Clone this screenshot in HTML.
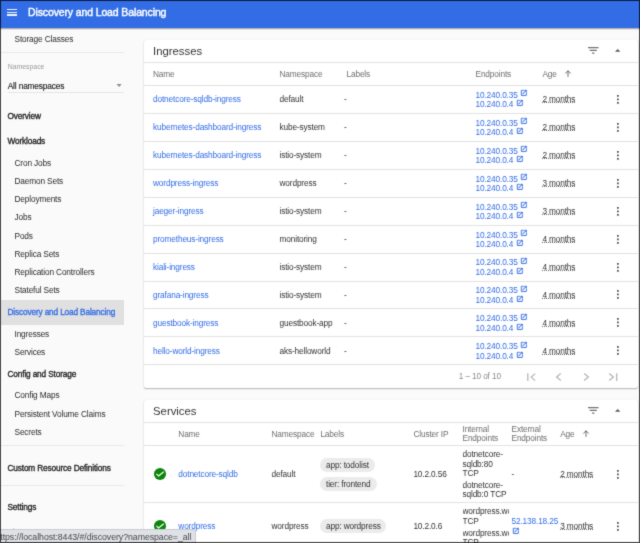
<!DOCTYPE html>
<html><head><meta charset="utf-8"><title>Discovery and Load Balancing</title>
<style>
*{box-sizing:border-box;margin:0;padding:0}
html,body{width:640px;height:543px;overflow:hidden;background:#fafafa;font-family:"Liberation Sans",sans-serif;color:#212121}
#frame{will-change:transform;filter:url(#sb);position:absolute;left:0;top:0;width:640px;height:543px;overflow:hidden;background:#fafafa}
#bd{position:absolute;left:0;top:0;width:640px;height:543px;border:1px solid rgba(0,0,0,.72);z-index:50;pointer-events:none}
#hdr{position:absolute;left:0;top:0;width:640px;height:28px;background:#326de6;box-shadow:0 .5px 1.2px rgba(0,0,0,.38);z-index:5}
#hdr .title{position:absolute;left:28px;top:5px;height:14px;line-height:14px;font-size:10.5px;font-weight:normal;-webkit-text-stroke:0.42px #fff;color:#fff;white-space:nowrap;letter-spacing:-0.125px}
.ham i{position:absolute;left:6.9px;width:10.6px;height:1.2px;background:#fff;opacity:.92}
.t{position:absolute;white-space:nowrap;height:12px;line-height:12px;font-size:8.3px;letter-spacing:-0.15px;color:#333}
.nh{font-weight:normal;-webkit-text-stroke:0.32px currentColor;left:7.5px;font-size:8.3px;letter-spacing:-0.16px;color:#222}
.ns{left:14.5px;color:#2b2b2b}
.hr{position:absolute;left:1px;width:123px;height:1px;background:#e9e9e9}
.card{position:absolute;left:144px;width:493.5px;background:#fff;box-shadow:0 1px 1.5px rgba(0,0,0,.28),0 0 1px rgba(0,0,0,.12);border-radius:2px;overflow:hidden}
.ct{position:absolute;left:9px;font-size:11.35px;height:16px;line-height:16px;color:#333;white-space:nowrap}
.ln{position:absolute;left:0;width:494px;height:1px;background:#e2e2e2}
.th{color:#6e6e6e}
.lk{color:#326de6}
.u{text-decoration:underline dotted #666;text-decoration-thickness:1px;text-underline-offset:0.4px;text-decoration-skip-ink:none}
.chip{position:absolute;height:14px;border-radius:7px;background:#ebebeb}
svg{position:absolute;overflow:visible}
</style></head><body>
<svg width="0" height="0" style="position:absolute"><defs><filter id="sb" x="0" y="0" width="100%" height="100%" color-interpolation-filters="sRGB"><feConvolveMatrix order="3" kernelMatrix="0.02 0.09 0.02 0.09 0.56 0.09 0.02 0.09 0.02" edgeMode="duplicate" preserveAlpha="true"/></filter></defs></svg>
<div id="frame">
<div id="hdr"><div class="ham"><i style="top:8.800px"></i><i style="top:11.600px"></i><i style="top:14.400px"></i></div><div class="title">Discovery and Load Balancing</div></div>
<div id="side">
<div class="t ns" style="top:33.00px;">Storage Classes</div>
<div class="hr" style="top:52px"></div>
<div class="t " style="left:7.70px;top:61.00px;font-size:6.9px;letter-spacing:0;color:#9a9a9a">Namespace</div>
<div class="t " style="left:7.70px;top:79.70px;color:#222;letter-spacing:-0.14px;-webkit-text-stroke:0.15px #222">All namespaces</div>
<div class="hr" style="top:92px;left:7.5px;width:116.500px;background:#e6e6e6"></div>
<svg style="left:115.500px;top:84.300px" width="6.200" height="3.100" viewBox="0 0 5 3"><path d="M0 0h5L2.500 3z" fill="#8f8f8f"/></svg>
<div class="t nh" style="top:109.50px;">Overview</div>
<div class="t nh" style="top:134.70px;">Workloads</div>
<div class="t ns" style="top:156.50px;">Cron Jobs</div>
<div class="t ns" style="top:174.70px;">Daemon Sets</div>
<div class="t ns" style="top:193.00px;">Deployments</div>
<div class="t ns" style="top:211.20px;">Jobs</div>
<div class="t ns" style="top:229.70px;">Pods</div>
<div class="t ns" style="top:248.00px;">Replica Sets</div>
<div class="t ns" style="top:266.00px;">Replication Controllers</div>
<div class="t ns" style="top:284.40px;">Stateful Sets</div>
<div style="position:absolute;left:1px;top:299.5px;width:123px;height:25px;background:#e0e0e0"></div>
<div class="t nh" style="top:306.00px;color:#326de6">Discovery and Load Balancing</div>
<div class="t ns" style="top:328.00px;">Ingresses</div>
<div class="t ns" style="top:346.00px;">Services</div>
<div class="t nh" style="top:368.00px;">Config and Storage</div>
<div class="t ns" style="top:389.00px;">Config Maps</div>
<div class="t ns" style="top:407.50px;">Persistent Volume Claims</div>
<div class="t ns" style="top:425.80px;">Secrets</div>
<div class="hr" style="top:445px"></div>
<div class="t nh" style="top:462.00px;">Custom Resource Definitions</div>
<div class="hr" style="top:485px"></div>
<div class="t nh" style="top:501.00px;">Settings</div>
<div class="t nh" style="top:526.50px;">About</div>
</div>
<div class="card" style="top:40.0px;height:348px">
<div class="ct" style="top:2.50px">Ingresses</div>
<svg style="left:443.90px;top:6.85px" width="11" height="8" viewBox="0 0 11 8"><path d="M0 0h10.500v1.150H0zM1.700 2.800h7.100v1.150H1.700zM4.100 5.600h2.300v1.150H4.100z" fill="#707070"/></svg>
<svg style="left:471.40px;top:8.70px" width="5.400" height="2.900" viewBox="0 0 6 3"><path d="M0 3h6L3 0z" fill="#5a5a5a"/></svg>
<div class="ln" style="top:22.00px"></div>
<div class="t th" style="left:9.00px;top:28.00px;">Name</div>
<div class="t th" style="left:135.50px;top:28.00px;">Namespace</div>
<div class="t th" style="left:202.50px;top:28.00px;">Labels</div>
<div class="t th" style="left:331.50px;top:28.00px;">Endpoints</div>
<div class="t th" style="left:398.40px;top:28.00px;">Age</div>
<svg style="left:420.50px;top:30.10px" width="6" height="7" viewBox="0 0 6 7"><path d="M3 .8v6M.3 3.500L3 .8l2.700 2.700" fill="none" stroke="#444" stroke-width=".8"/></svg>
<svg style="left:0;top:44.80px" width="494" height="1"><rect width="494" height="1" fill="#e2e2e2"/></svg>
<div class="t lk" style="left:9.00px;top:53.10px;">dotnetcore-sqldb-ingress</div>
<div class="t " style="left:135.50px;top:53.10px;">default</div>
<div class="t " style="left:200.00px;top:53.10px;">-</div>
<div class="t lk" style="left:331.50px;top:48.70px;">10.240.0.35</div>
<svg style="left:375.90px;top:49.40px" width="7.6" height="7.6" viewBox="0 0 24 24"><path d="M19 19H5V5h7V3H5a2 2 0 0 0-2 2v14a2 2 0 0 0 2 2h14c1.1 0 2-.9 2-2v-7h-2v7zM14 3v2h3.59l-9.830 9.830 1.410 1.410L19 6.410V10h2V3h-7z" fill="#326de6" stroke="#326de6" stroke-width=".8"/></svg>
<div class="t lk" style="left:331.50px;top:58.20px;">10.240.0.4</div>
<svg style="left:371.50px;top:58.90px" width="7.6" height="7.6" viewBox="0 0 24 24"><path d="M19 19H5V5h7V3H5a2 2 0 0 0-2 2v14a2 2 0 0 0 2 2h14c1.1 0 2-.9 2-2v-7h-2v7zM14 3v2h3.59l-9.830 9.830 1.410 1.410L19 6.410V10h2V3h-7z" fill="#326de6" stroke="#326de6" stroke-width=".8"/></svg>
<div class="t u" style="left:398.40px;top:53.10px;">2 months</div>
<svg style="left:473.15px;top:54.75px" width="2" height="9" viewBox="0 0 2 9"><path d="M0 0h1.800v1.800H0zM0 3.500h1.800v1.800H0zM0 7h1.800v1.800H0z" fill="#555"/></svg>
<svg style="left:0;top:72.80px" width="494" height="1"><rect width="494" height="1" fill="#e2e2e2"/></svg>
<div class="t lk" style="left:9.00px;top:81.06px;">kubernetes-dashboard-ingress</div>
<div class="t " style="left:135.50px;top:81.06px;">kube-system</div>
<div class="t " style="left:200.00px;top:81.06px;">-</div>
<div class="t lk" style="left:331.50px;top:76.66px;">10.240.0.35</div>
<svg style="left:375.90px;top:77.36px" width="7.6" height="7.6" viewBox="0 0 24 24"><path d="M19 19H5V5h7V3H5a2 2 0 0 0-2 2v14a2 2 0 0 0 2 2h14c1.1 0 2-.9 2-2v-7h-2v7zM14 3v2h3.59l-9.830 9.830 1.410 1.410L19 6.410V10h2V3h-7z" fill="#326de6" stroke="#326de6" stroke-width=".8"/></svg>
<div class="t lk" style="left:331.50px;top:86.16px;">10.240.0.4</div>
<svg style="left:371.50px;top:86.86px" width="7.6" height="7.6" viewBox="0 0 24 24"><path d="M19 19H5V5h7V3H5a2 2 0 0 0-2 2v14a2 2 0 0 0 2 2h14c1.1 0 2-.9 2-2v-7h-2v7zM14 3v2h3.59l-9.830 9.830 1.410 1.410L19 6.410V10h2V3h-7z" fill="#326de6" stroke="#326de6" stroke-width=".8"/></svg>
<div class="t u" style="left:398.40px;top:81.06px;">2 months</div>
<svg style="left:473.15px;top:82.71px" width="2" height="9" viewBox="0 0 2 9"><path d="M0 0h1.800v1.800H0zM0 3.500h1.800v1.800H0zM0 7h1.800v1.800H0z" fill="#555"/></svg>
<svg style="left:0;top:100.90px" width="494" height="1"><rect width="494" height="1" fill="#e2e2e2"/></svg>
<div class="t lk" style="left:9.00px;top:109.02px;">kubernetes-dashboard-ingress</div>
<div class="t " style="left:135.50px;top:109.02px;">istio-system</div>
<div class="t " style="left:200.00px;top:109.02px;">-</div>
<div class="t lk" style="left:331.50px;top:104.62px;">10.240.0.35</div>
<svg style="left:375.90px;top:105.32px" width="7.6" height="7.6" viewBox="0 0 24 24"><path d="M19 19H5V5h7V3H5a2 2 0 0 0-2 2v14a2 2 0 0 0 2 2h14c1.1 0 2-.9 2-2v-7h-2v7zM14 3v2h3.59l-9.830 9.830 1.410 1.410L19 6.410V10h2V3h-7z" fill="#326de6" stroke="#326de6" stroke-width=".8"/></svg>
<div class="t lk" style="left:331.50px;top:114.12px;">10.240.0.4</div>
<svg style="left:371.50px;top:114.82px" width="7.6" height="7.6" viewBox="0 0 24 24"><path d="M19 19H5V5h7V3H5a2 2 0 0 0-2 2v14a2 2 0 0 0 2 2h14c1.1 0 2-.9 2-2v-7h-2v7zM14 3v2h3.59l-9.830 9.830 1.410 1.410L19 6.410V10h2V3h-7z" fill="#326de6" stroke="#326de6" stroke-width=".8"/></svg>
<div class="t u" style="left:398.40px;top:109.02px;">2 months</div>
<svg style="left:473.15px;top:110.67px" width="2" height="9" viewBox="0 0 2 9"><path d="M0 0h1.800v1.800H0zM0 3.500h1.800v1.800H0zM0 7h1.800v1.800H0z" fill="#555"/></svg>
<svg style="left:0;top:129.00px" width="494" height="1"><rect width="494" height="1" fill="#e2e2e2"/></svg>
<div class="t lk" style="left:9.00px;top:136.98px;">wordpress-ingress</div>
<div class="t " style="left:135.50px;top:136.98px;">wordpress</div>
<div class="t " style="left:200.00px;top:136.98px;">-</div>
<div class="t lk" style="left:331.50px;top:132.58px;">10.240.0.35</div>
<svg style="left:375.90px;top:133.28px" width="7.6" height="7.6" viewBox="0 0 24 24"><path d="M19 19H5V5h7V3H5a2 2 0 0 0-2 2v14a2 2 0 0 0 2 2h14c1.1 0 2-.9 2-2v-7h-2v7zM14 3v2h3.59l-9.830 9.830 1.410 1.410L19 6.410V10h2V3h-7z" fill="#326de6" stroke="#326de6" stroke-width=".8"/></svg>
<div class="t lk" style="left:331.50px;top:142.08px;">10.240.0.4</div>
<svg style="left:371.50px;top:142.78px" width="7.6" height="7.6" viewBox="0 0 24 24"><path d="M19 19H5V5h7V3H5a2 2 0 0 0-2 2v14a2 2 0 0 0 2 2h14c1.1 0 2-.9 2-2v-7h-2v7zM14 3v2h3.59l-9.830 9.830 1.410 1.410L19 6.410V10h2V3h-7z" fill="#326de6" stroke="#326de6" stroke-width=".8"/></svg>
<div class="t u" style="left:398.40px;top:136.98px;">3 months</div>
<svg style="left:473.15px;top:138.63px" width="2" height="9" viewBox="0 0 2 9"><path d="M0 0h1.800v1.800H0zM0 3.500h1.800v1.800H0zM0 7h1.800v1.800H0z" fill="#555"/></svg>
<svg style="left:0;top:156.60px" width="494" height="1"><rect width="494" height="1" fill="#e2e2e2"/></svg>
<div class="t lk" style="left:9.00px;top:164.94px;">jaeger-ingress</div>
<div class="t " style="left:135.50px;top:164.94px;">istio-system</div>
<div class="t " style="left:200.00px;top:164.94px;">-</div>
<div class="t lk" style="left:331.50px;top:160.54px;">10.240.0.35</div>
<svg style="left:375.90px;top:161.24px" width="7.6" height="7.6" viewBox="0 0 24 24"><path d="M19 19H5V5h7V3H5a2 2 0 0 0-2 2v14a2 2 0 0 0 2 2h14c1.1 0 2-.9 2-2v-7h-2v7zM14 3v2h3.59l-9.830 9.830 1.410 1.410L19 6.410V10h2V3h-7z" fill="#326de6" stroke="#326de6" stroke-width=".8"/></svg>
<div class="t lk" style="left:331.50px;top:170.04px;">10.240.0.4</div>
<svg style="left:371.50px;top:170.74px" width="7.6" height="7.6" viewBox="0 0 24 24"><path d="M19 19H5V5h7V3H5a2 2 0 0 0-2 2v14a2 2 0 0 0 2 2h14c1.1 0 2-.9 2-2v-7h-2v7zM14 3v2h3.59l-9.830 9.830 1.410 1.410L19 6.410V10h2V3h-7z" fill="#326de6" stroke="#326de6" stroke-width=".8"/></svg>
<div class="t u" style="left:398.40px;top:164.94px;">3 months</div>
<svg style="left:473.15px;top:166.59px" width="2" height="9" viewBox="0 0 2 9"><path d="M0 0h1.800v1.800H0zM0 3.500h1.800v1.800H0zM0 7h1.800v1.800H0z" fill="#555"/></svg>
<svg style="left:0;top:184.90px" width="494" height="1"><rect width="494" height="1" fill="#e2e2e2"/></svg>
<div class="t lk" style="left:9.00px;top:192.90px;">prometheus-ingress</div>
<div class="t " style="left:135.50px;top:192.90px;">monitoring</div>
<div class="t " style="left:200.00px;top:192.90px;">-</div>
<div class="t lk" style="left:331.50px;top:188.50px;">10.240.0.35</div>
<svg style="left:375.90px;top:189.20px" width="7.6" height="7.6" viewBox="0 0 24 24"><path d="M19 19H5V5h7V3H5a2 2 0 0 0-2 2v14a2 2 0 0 0 2 2h14c1.1 0 2-.9 2-2v-7h-2v7zM14 3v2h3.59l-9.830 9.830 1.410 1.410L19 6.410V10h2V3h-7z" fill="#326de6" stroke="#326de6" stroke-width=".8"/></svg>
<div class="t lk" style="left:331.50px;top:198.00px;">10.240.0.4</div>
<svg style="left:371.50px;top:198.70px" width="7.6" height="7.6" viewBox="0 0 24 24"><path d="M19 19H5V5h7V3H5a2 2 0 0 0-2 2v14a2 2 0 0 0 2 2h14c1.1 0 2-.9 2-2v-7h-2v7zM14 3v2h3.59l-9.830 9.830 1.410 1.410L19 6.410V10h2V3h-7z" fill="#326de6" stroke="#326de6" stroke-width=".8"/></svg>
<div class="t u" style="left:398.40px;top:192.90px;">4 months</div>
<svg style="left:473.15px;top:194.55px" width="2" height="9" viewBox="0 0 2 9"><path d="M0 0h1.800v1.800H0zM0 3.500h1.800v1.800H0zM0 7h1.800v1.800H0z" fill="#555"/></svg>
<svg style="left:0;top:212.80px" width="494" height="1"><rect width="494" height="1" fill="#e2e2e2"/></svg>
<div class="t lk" style="left:9.00px;top:220.86px;">kiali-ingress</div>
<div class="t " style="left:135.50px;top:220.86px;">istio-system</div>
<div class="t " style="left:200.00px;top:220.86px;">-</div>
<div class="t lk" style="left:331.50px;top:216.46px;">10.240.0.35</div>
<svg style="left:375.90px;top:217.16px" width="7.6" height="7.6" viewBox="0 0 24 24"><path d="M19 19H5V5h7V3H5a2 2 0 0 0-2 2v14a2 2 0 0 0 2 2h14c1.1 0 2-.9 2-2v-7h-2v7zM14 3v2h3.59l-9.830 9.830 1.410 1.410L19 6.410V10h2V3h-7z" fill="#326de6" stroke="#326de6" stroke-width=".8"/></svg>
<div class="t lk" style="left:331.50px;top:225.96px;">10.240.0.4</div>
<svg style="left:371.50px;top:226.66px" width="7.6" height="7.6" viewBox="0 0 24 24"><path d="M19 19H5V5h7V3H5a2 2 0 0 0-2 2v14a2 2 0 0 0 2 2h14c1.1 0 2-.9 2-2v-7h-2v7zM14 3v2h3.59l-9.830 9.830 1.410 1.410L19 6.410V10h2V3h-7z" fill="#326de6" stroke="#326de6" stroke-width=".8"/></svg>
<div class="t u" style="left:398.40px;top:220.86px;">4 months</div>
<svg style="left:473.15px;top:222.51px" width="2" height="9" viewBox="0 0 2 9"><path d="M0 0h1.800v1.800H0zM0 3.500h1.800v1.800H0zM0 7h1.800v1.800H0z" fill="#555"/></svg>
<svg style="left:0;top:240.55px" width="494" height="1"><rect width="494" height="1" fill="#e2e2e2"/></svg>
<div class="t lk" style="left:9.00px;top:248.82px;">grafana-ingress</div>
<div class="t " style="left:135.50px;top:248.82px;">istio-system</div>
<div class="t " style="left:200.00px;top:248.82px;">-</div>
<div class="t lk" style="left:331.50px;top:244.42px;">10.240.0.35</div>
<svg style="left:375.90px;top:245.12px" width="7.6" height="7.6" viewBox="0 0 24 24"><path d="M19 19H5V5h7V3H5a2 2 0 0 0-2 2v14a2 2 0 0 0 2 2h14c1.1 0 2-.9 2-2v-7h-2v7zM14 3v2h3.59l-9.830 9.830 1.410 1.410L19 6.410V10h2V3h-7z" fill="#326de6" stroke="#326de6" stroke-width=".8"/></svg>
<div class="t lk" style="left:331.50px;top:253.92px;">10.240.0.4</div>
<svg style="left:371.50px;top:254.62px" width="7.6" height="7.6" viewBox="0 0 24 24"><path d="M19 19H5V5h7V3H5a2 2 0 0 0-2 2v14a2 2 0 0 0 2 2h14c1.1 0 2-.9 2-2v-7h-2v7zM14 3v2h3.59l-9.830 9.830 1.410 1.410L19 6.410V10h2V3h-7z" fill="#326de6" stroke="#326de6" stroke-width=".8"/></svg>
<div class="t u" style="left:398.40px;top:248.82px;">4 months</div>
<svg style="left:473.15px;top:250.47px" width="2" height="9" viewBox="0 0 2 9"><path d="M0 0h1.800v1.800H0zM0 3.500h1.800v1.800H0zM0 7h1.800v1.800H0z" fill="#555"/></svg>
<svg style="left:0;top:267.95px" width="494" height="1"><rect width="494" height="1" fill="#e2e2e2"/></svg>
<div class="t lk" style="left:9.00px;top:276.78px;">guestbook-ingress</div>
<div class="t " style="left:135.50px;top:276.78px;">guestbook-app</div>
<div class="t " style="left:200.00px;top:276.78px;">-</div>
<div class="t lk" style="left:331.50px;top:272.38px;">10.240.0.35</div>
<svg style="left:375.90px;top:273.08px" width="7.6" height="7.6" viewBox="0 0 24 24"><path d="M19 19H5V5h7V3H5a2 2 0 0 0-2 2v14a2 2 0 0 0 2 2h14c1.1 0 2-.9 2-2v-7h-2v7zM14 3v2h3.59l-9.830 9.830 1.410 1.410L19 6.410V10h2V3h-7z" fill="#326de6" stroke="#326de6" stroke-width=".8"/></svg>
<div class="t lk" style="left:331.50px;top:281.88px;">10.240.0.4</div>
<svg style="left:371.50px;top:282.58px" width="7.6" height="7.6" viewBox="0 0 24 24"><path d="M19 19H5V5h7V3H5a2 2 0 0 0-2 2v14a2 2 0 0 0 2 2h14c1.1 0 2-.9 2-2v-7h-2v7zM14 3v2h3.59l-9.830 9.830 1.410 1.410L19 6.410V10h2V3h-7z" fill="#326de6" stroke="#326de6" stroke-width=".8"/></svg>
<div class="t u" style="left:398.40px;top:276.78px;">4 months</div>
<svg style="left:473.15px;top:278.43px" width="2" height="9" viewBox="0 0 2 9"><path d="M0 0h1.800v1.800H0zM0 3.500h1.800v1.800H0zM0 7h1.800v1.800H0z" fill="#555"/></svg>
<svg style="left:0;top:295.80px" width="494" height="1"><rect width="494" height="1" fill="#e2e2e2"/></svg>
<div class="t lk" style="left:9.00px;top:304.74px;">hello-world-ingress</div>
<div class="t " style="left:135.50px;top:304.74px;">aks-helloworld</div>
<div class="t " style="left:200.00px;top:304.74px;">-</div>
<div class="t lk" style="left:331.50px;top:300.34px;">10.240.0.35</div>
<svg style="left:375.90px;top:301.04px" width="7.6" height="7.6" viewBox="0 0 24 24"><path d="M19 19H5V5h7V3H5a2 2 0 0 0-2 2v14a2 2 0 0 0 2 2h14c1.1 0 2-.9 2-2v-7h-2v7zM14 3v2h3.59l-9.830 9.830 1.410 1.410L19 6.410V10h2V3h-7z" fill="#326de6" stroke="#326de6" stroke-width=".8"/></svg>
<div class="t lk" style="left:331.50px;top:309.84px;">10.240.0.4</div>
<svg style="left:371.50px;top:310.54px" width="7.6" height="7.6" viewBox="0 0 24 24"><path d="M19 19H5V5h7V3H5a2 2 0 0 0-2 2v14a2 2 0 0 0 2 2h14c1.1 0 2-.9 2-2v-7h-2v7zM14 3v2h3.59l-9.830 9.830 1.410 1.410L19 6.410V10h2V3h-7z" fill="#326de6" stroke="#326de6" stroke-width=".8"/></svg>
<div class="t u" style="left:398.40px;top:304.74px;">4 months</div>
<svg style="left:473.15px;top:306.39px" width="2" height="9" viewBox="0 0 2 9"><path d="M0 0h1.800v1.800H0zM0 3.500h1.800v1.800H0zM0 7h1.800v1.800H0z" fill="#555"/></svg>
<svg style="left:0;top:323.90px" width="494" height="1"><rect width="494" height="1" fill="#e2e2e2"/></svg>
<div class="t " style="left:314.80px;top:331.00px;color:#8a8a8a;font-size:8.2px;letter-spacing:-0.1px">1 &ndash; 10 of 10</div>
<svg style="left:0;top:0" width="494" height="348"><path d="M383.80 333.20v7.800M391.20 333.60L387.20 337.10L391.20 340.60M416.80 333.60L412.60 337.10L416.80 340.60M440.20 333.60L444.40 337.10L440.20 340.60M465.20 333.60L469.40 337.10L465.20 340.60M472.70 333.20v7.800" fill="none" stroke="#b4b4b4" stroke-width="1.250"/></svg>
</div>
<div class="card" style="top:399.5px;height:160px">
<div class="ct" style="top:3.50px">Services</div>
<svg style="left:443.90px;top:7.95px" width="11" height="8" viewBox="0 0 11 8"><path d="M0 0h10.500v1.150H0zM1.700 2.800h7.100v1.150H1.700zM4.100 5.600h2.300v1.150H4.100z" fill="#707070"/></svg>
<svg style="left:471.40px;top:9.80px" width="5.400" height="2.900" viewBox="0 0 6 3"><path d="M0 3h6L3 0z" fill="#5a5a5a"/></svg>
<div class="ln" style="top:22.80px"></div>
<div class="t th" style="left:34.30px;top:28.50px;">Name</div>
<div class="t th" style="left:127.50px;top:28.50px;">Namespace</div>
<div class="t th" style="left:176.40px;top:28.50px;">Labels</div>
<div class="t th" style="left:269.40px;top:28.50px;">Cluster IP</div>
<div class="t th" style="left:318.50px;top:23.70px;">Internal</div>
<div class="t th" style="left:318.50px;top:32.70px;">Endpoints</div>
<div class="t th" style="left:367.50px;top:23.70px;">External</div>
<div class="t th" style="left:367.50px;top:32.70px;">Endpoints</div>
<div class="t th" style="left:416.20px;top:28.50px;">Age</div>
<svg style="left:438.50px;top:30.60px" width="6" height="7" viewBox="0 0 6 7"><path d="M3 .8v6M.3 3.500L3 .8l2.700 2.700" fill="none" stroke="#444" stroke-width=".8"/></svg>
<div class="ln" style="top:45.80px"></div>
<svg style="left:10.00px;top:68.50px" width="12" height="12" viewBox="0 0 12 12"><circle cx="6" cy="6" r="6.050" fill="#0b860b"/><path d="M2.400 5.800l2.200 2.200 5.100-4.300" fill="none" stroke="#fff" stroke-width="1.150"/></svg>
<div class="t lk" style="left:34.30px;top:68.50px;">dotnetcore-sqldb</div>
<div class="t " style="left:127.50px;top:68.50px;">default</div>
<div class="chip" style="left:176.00px;top:58.10px;width:55.4px"></div>
<div class="t " style="left:182.00px;top:59.10px;">app: todolist</div>
<div class="chip" style="left:176.00px;top:77.20px;width:56.8px"></div>
<div class="t " style="left:182.00px;top:78.10px;">tier: frontend</div>
<div class="t " style="left:269.40px;top:68.50px;">10.2.0.56</div>
<div class="t " style="left:318.50px;top:48.70px;">dotnetcore-</div>
<div class="t " style="left:318.50px;top:58.10px;">sqldb:80</div>
<div class="t " style="left:318.50px;top:67.70px;">TCP</div>
<div class="t " style="left:318.50px;top:79.50px;">dotnetcore-</div>
<div class="t " style="left:318.50px;top:88.90px;">sqldb:0 TCP</div>
<div class="t " style="left:367.50px;top:68.50px;">-</div>
<div class="t u" style="left:416.20px;top:68.50px;">2 months</div>
<svg style="left:473.15px;top:70.15px" width="2" height="9" viewBox="0 0 2 9"><path d="M0 0h1.800v1.800H0zM0 3.500h1.800v1.800H0zM0 7h1.800v1.800H0z" fill="#555"/></svg>
<div class="ln" style="top:102.80px"></div>
<svg style="left:10.00px;top:120.80px" width="12" height="12" viewBox="0 0 12 12"><circle cx="6" cy="6" r="6.050" fill="#0b860b"/><path d="M2.400 5.800l2.200 2.200 5.100-4.300" fill="none" stroke="#fff" stroke-width="1.150"/></svg>
<div class="t lk" style="left:34.30px;top:120.80px;">wordpress</div>
<div class="t " style="left:127.50px;top:120.80px;">wordpress</div>
<div class="chip" style="left:176.00px;top:119.80px;width:65.8px"></div>
<div class="t " style="left:182.00px;top:120.80px;">app: wordpress</div>
<div class="t " style="left:269.40px;top:120.80px;">10.2.0.6</div>
<div style="position:absolute;left:318.50px;top:103.50px;width:46.300px;height:50px;overflow:hidden">
<div class="t " style="left:0.00px;top:2.20px;">wordpress.wordpress:80</div>
<div class="t " style="left:0.00px;top:11.70px;">TCP</div>
<div class="t " style="left:0.00px;top:23.60px;">wordpress.wordpress:0</div>
<div class="t " style="left:0.00px;top:33.00px;">TCP</div>
</div>
<div class="t lk" style="left:367.50px;top:115.80px;">52.138.18.25</div>
<svg style="left:367.50px;top:127.00px" width="7.6" height="7.6" viewBox="0 0 24 24"><path d="M19 19H5V5h7V3H5a2 2 0 0 0-2 2v14a2 2 0 0 0 2 2h14c1.1 0 2-.9 2-2v-7h-2v7zM14 3v2h3.59l-9.830 9.830 1.410 1.410L19 6.410V10h2V3h-7z" fill="#326de6" stroke="#326de6" stroke-width=".8"/></svg>
<div class="t u" style="left:416.20px;top:120.80px;">3 months</div>
<svg style="left:473.15px;top:122.45px" width="2" height="9" viewBox="0 0 2 9"><path d="M0 0h1.800v1.800H0zM0 3.500h1.800v1.800H0zM0 7h1.800v1.800H0z" fill="#555"/></svg>
</div>
<div style="position:absolute;left:0;top:529px;width:196.300px;height:14px;background:#dee1e6;border-top:1px solid #c9ccd1;border-right:1px solid #c9ccd1;border-top-right-radius:3px;overflow:hidden;z-index:20"><div class="t" style="left:0.3px;top:1.2px;font-size:8.800px;color:#484848;letter-spacing:-0.07px">ttps://localhost:8443/#/discovery?namespace=_all</div></div>
<div id="bd"></div>
</div>
</body></html>
